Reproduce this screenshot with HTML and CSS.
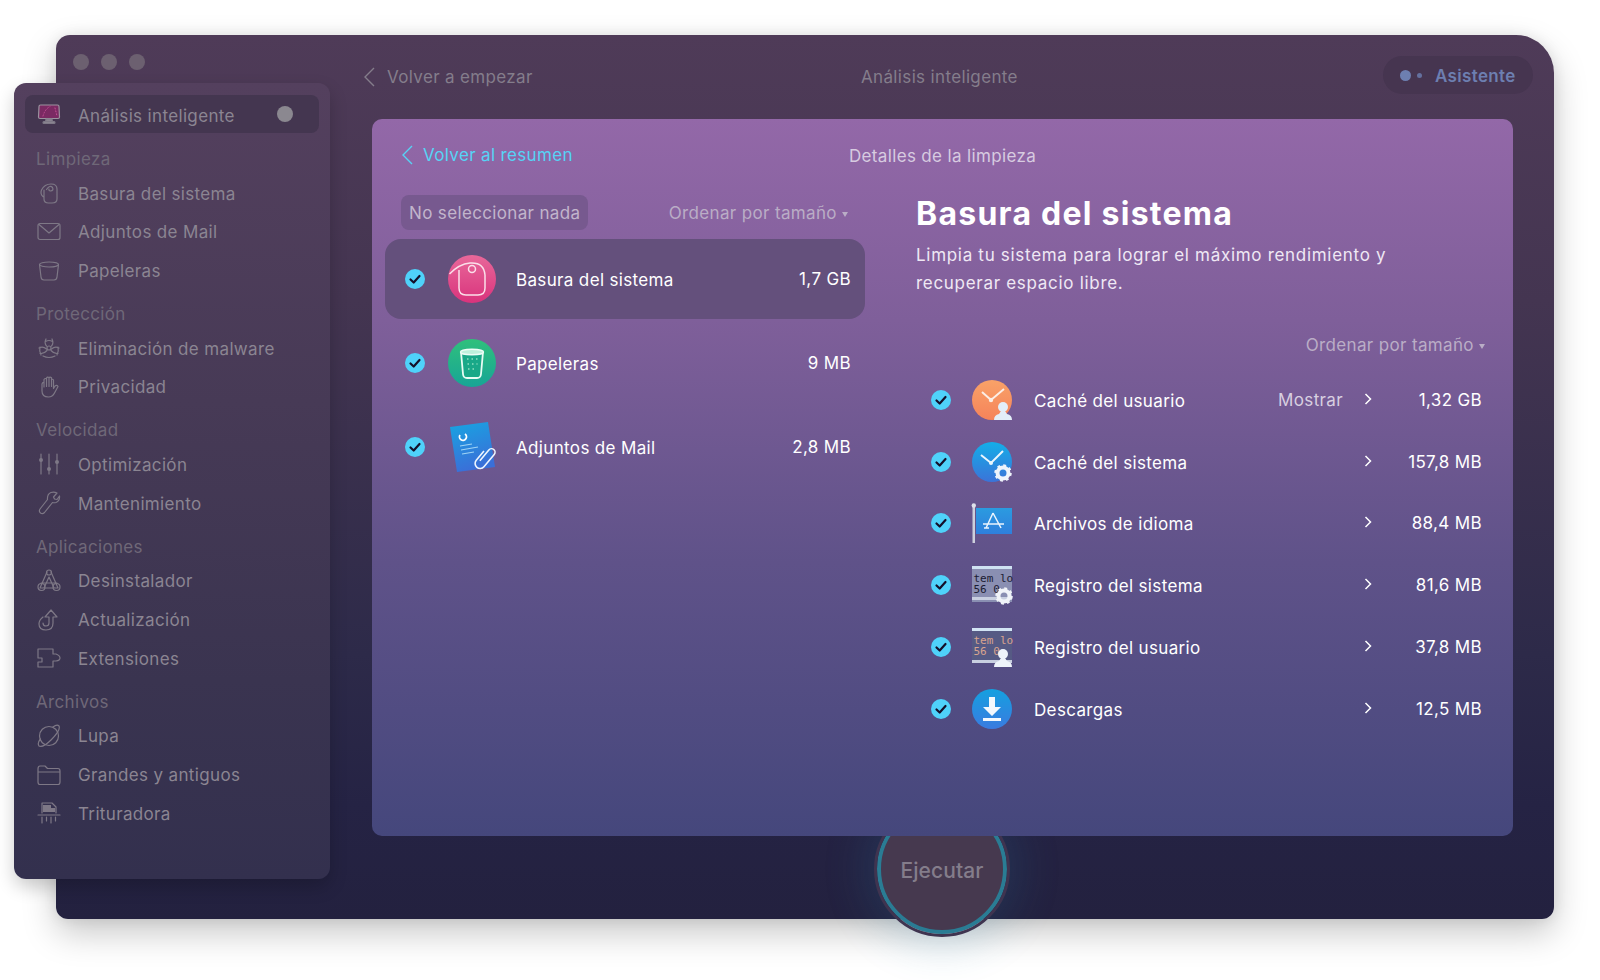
FILE: index.html
```html
<!DOCTYPE html>
<html lang="es">
<head>
<meta charset="utf-8">
<title>Análisis inteligente</title>
<link rel="stylesheet" href="styles.css">
</head>
<body>
<div class="window">
  <aside class="sidebar">
    <div class="side-active">
      <svg class="side-icon" viewBox="0 0 24 24"><path d="M2 4.500 Q2 3 3.500 3 H20.500 Q22 3 22 4.500 L22.500 15 Q22.500 16.500 21 16.500 H3 Q1.500 16.500 1.500 15 Z" fill="#7b2a63" stroke="#9b929f" stroke-width="1.2"/><path d="M6 14 Q8 7 13 4.500 M18 6 L20 14" stroke="#c64f96" stroke-width="1" stroke-dasharray="1 2" fill="none"/><path d="M9 17 H15 L15.500 19.500 H8.500 Z" fill="#8a8490"/><rect x="6" y="19.500" width="12" height="2" rx="1" fill="#8a8490"/></svg>
      <span class="side-active-label">Análisis inteligente</span>
      <span class="side-dot"></span>
    </div>

    <div class="side-head">Limpieza</div>
    <div class="side-item">
      <svg class="side-icon" viewBox="0 0 24 24"><path d="M7 9 V18 Q7 22 11.500 22 H15 Q20 22 20 18 V8 Q20 3 14 3 Q7.500 3 4.500 9 Q3 13 6 15.500" /><path d="M9.500 8.500 Q13 3.500 15.500 6.500 Q17 9.500 13.500 10 Q11.500 9.800 12 8"/></svg>
      <span>Basura del sistema</span>
    </div>
    <div class="side-item">
      <svg class="side-icon" viewBox="0 0 24 24"><rect x="1" y="3.500" width="22" height="16" rx="2"/><path d="M2 4.500 L12 13 L22 4.500"/></svg>
      <span>Adjuntos de Mail</span>
    </div>
    <div class="side-item">
      <svg class="side-icon" viewBox="0 0 24 24"><ellipse cx="12" cy="5.500" rx="9.500" ry="2.500"/><path d="M2.500 5.500 L4 18 Q4.300 21 7 21 H17 Q19.700 21 20 18 L21.500 5.500"/></svg>
      <span>Papeleras</span>
    </div>

    <div class="side-head">Protección</div>
    <div class="side-item">
      <svg class="side-icon" viewBox="0 0 24 24"><circle cx="12" cy="12" r="2"/><path d="M9 3 Q7 7 9.500 10 M15 3 Q17 7 14.500 10 M8.500 5.500 Q12 3.500 15.500 5.500 M2 12 Q6 10 9.500 13 M22 12 Q18 10 14.500 13 M3 17.500 Q7 18 10 14.500 M21 17.500 Q17 18 14 14.500 M6 20 Q12 23 18 20 M3 11 Q2 15 4 19 M21 11 Q22 15 20 19"/></svg>
      <span>Eliminación de malware</span>
    </div>
    <div class="side-item">
      <svg class="side-icon" viewBox="0 0 24 24"><path d="M5 9 V16 Q5 22 11.500 22 Q15.500 22 17.500 18 L21 11.500 Q20 9.500 18 11 L16.500 13.500 V5 Q15.500 3.500 14.500 5 V2.800 Q13 1.500 12 2.800 V2.500 Q10.500 1.500 9.500 3 V4 Q8 2.800 7 4.500 V8 Q6 6.800 5 9 Z M7 5 V12 M9.500 3 V11.500 M12 2.800 V11.500 M14.500 5 V11.500"/></svg>
      <span>Privacidad</span>
    </div>

    <div class="side-head">Velocidad</div>
    <div class="side-item">
      <svg class="side-icon" viewBox="0 0 24 24"><path d="M4 1 V21 M12 1 V21 M20 1 V21"/><circle class="fill" cx="4" cy="7" r="2"/><circle class="fill" cx="12" cy="16" r="2"/><circle class="fill" cx="20" cy="9" r="2"/></svg>
      <span>Optimización</span>
    </div>
    <div class="side-item">
      <svg class="side-icon" viewBox="0 0 24 24"><path d="M20 2 L16.500 6 L17.500 8 L20 8.500 L22.500 5 Q23 10 19 11.500 Q17 12 15.500 11.500 L7.500 21.500 Q5.500 23.500 3.500 22 Q1.500 20.500 3 18 L10.500 8.500 Q10 3 14 1.500 Q17 .5 20 2 Z"/></svg>
      <span>Mantenimiento</span>
    </div>

    <div class="side-head">Aplicaciones</div>
    <div class="side-item">
      <svg class="side-icon" viewBox="0 0 24 24"><path d="M10 3 L3 19 M14 3 L21 19 M4 14 H20 M3 19 H21 M7 19 L12 8 L17 19"/><circle cx="12" cy="3.500" r="2.500"/><circle cx="4.500" cy="18" r="3.500"/><circle cx="19.500" cy="18" r="3.500"/></svg>
      <span>Desinstalador</span>
    </div>
    <div class="side-item">
      <svg class="side-icon" viewBox="0 0 24 24"><path d="M6 9 Q2 12 2 16 Q2 22 9 22 Q16 22 16 15 V9 H20 L14 2 L8 9 H12 V15 Q12 18 9 18 Q6 18 6 15"/></svg>
      <span>Actualización</span>
    </div>
    <div class="side-item">
      <svg class="side-icon" viewBox="0 0 24 24"><path d="M1 3 H16 V8 H19 Q23 9.500 23 12 Q23 14.500 19 15 H16 V21 H1 V16 H5 V12 H1 V8 Z"/></svg>
      <span>Extensiones</span>
    </div>

    <div class="side-head">Archivos</div>
    <div class="side-item">
      <svg class="side-icon" viewBox="0 0 24 24"><circle cx="12" cy="12" r="9.500"/><path d="M2 22 Q6 24 14 16 Q24 6 22 2 Q20 0 16 3 M2 22 Q0 19 3.500 15"/></svg>
      <span>Lupa</span>
    </div>
    <div class="side-item">
      <svg class="side-icon" viewBox="0 0 24 24"><path d="M1 6 Q1 3 3 3 H8 L10.500 5.500 H21 Q23 5.500 23 8 V19 Q23 21.500 21 21.500 H3 Q1 21.500 1 19 Z M1 9 H23"/></svg>
      <span>Grandes y antiguos</span>
    </div>
    <div class="side-item">
      <svg class="side-icon" viewBox="0 0 24 24"><path d="M5 12 V2 H15 L19 6 V12 M1 14 H23 M5 16 V22 M9.500 16 V20 M14 16 V22 M18.500 16 V20"/><path class="fill" d="M6 4 H14 V7 H18 V11 H6 Z"/></svg>
      <span>Trituradora</span>
    </div>
  </aside>

  <header class="titlebar">
    <div class="lights"><i></i><i></i><i></i></div>
    <div class="back-start">
      <svg class="chev-left" viewBox="0 0 14 22"><path d="M12 2 L3 11 L12 20"/></svg>
      <span>Volver a empezar</span>
    </div>
    <div class="title-center">Análisis inteligente</div>
    <div class="assistant"><i class="a-big"></i><i class="a-small"></i><b>Asistente</b></div>
  </header>

  <main class="panel">
    <div class="panel-head">
      <div class="back-link">
        <svg class="chev-left" viewBox="0 0 14 22"><path d="M12 2 L3 11 L12 20"/></svg>
        <span>Volver al resumen</span>
      </div>
      <div class="panel-title">Detalles de la limpieza</div>
    </div>

    <div class="panel-body">
      <section class="left-col">
        <div class="toolbar">
          <div class="pill-btn">No seleccionar nada</div>
          <div class="sort">Ordenar por tamaño <i class="caret"></i></div>
        </div>

        <div class="cat-row selected">
          <span class="check"><svg viewBox="0 0 20 20"><path d="M5.500 10.500 L8.700 13.500 L14.500 7"/></svg></span>
          <svg class="cat-icon" viewBox="0 0 48 48"><defs><linearGradient id="gp" x1="0" y1="0" x2="0" y2="1"><stop offset="0" stop-color="#e8689a"/><stop offset="1" stop-color="#d9337c"/></linearGradient></defs><circle cx="24" cy="24" r="24" fill="url(#gp)"/><path d="M1.500 19 Q11 9 22 8 Q36 7 37 20 V33 Q37 40 30 40 H18 Q11 40 11 33 V15" fill="none" stroke="#fbdfe9" stroke-width="1.500"/><circle cx="24" cy="14" r="3.500" fill="none" stroke="#fbdfe9" stroke-width="1.500"/></svg>
          <span class="cat-name">Basura del sistema</span>
          <span class="cat-size">1,7 GB</span>
        </div>

        <div class="cat-row">
          <span class="check"><svg viewBox="0 0 20 20"><path d="M5.500 10.500 L8.700 13.500 L14.500 7"/></svg></span>
          <svg class="cat-icon" viewBox="0 0 48 48"><defs><linearGradient id="gg" x1="0" y1="0" x2="0" y2="1"><stop offset="0" stop-color="#2fc07c"/><stop offset="1" stop-color="#17a596"/></linearGradient></defs><circle cx="24" cy="24" r="24" fill="url(#gg)"/><path d="M13 13 L15 35 Q15.300 39 19 39 H29 Q32.700 39 33 35 L35 13" fill="#19a888" stroke="#e8fbf3" stroke-width="1.800"/><ellipse cx="24" cy="13" rx="11.500" ry="2.800" fill="#bff1dc" stroke="#eefcf6" stroke-width="1.400"/><path d="M19 20 H30 M19.500 25 H29.500 M20 30 H29" stroke="#8fe0bf" stroke-width="1.600" stroke-dasharray="1.500 3"/></svg>
          <span class="cat-name">Papeleras</span>
          <span class="cat-size">9 MB</span>
        </div>

        <div class="cat-row">
          <span class="check"><svg viewBox="0 0 20 20"><path d="M5.500 10.500 L8.700 13.500 L14.500 7"/></svg></span>
          <svg class="cat-icon" viewBox="0 0 48 48"><defs><linearGradient id="gb" x1="0" y1="0" x2=".3" y2="1"><stop offset="0" stop-color="#17a5e2"/><stop offset="1" stop-color="#3a6fd8"/></linearGradient></defs><path d="M2 4 L40 -1 L47 44 L9 49 Z" fill="url(#gb)"/><path d="M12 12 A3.500 3.500 0 1 0 17 11" fill="none" stroke="#fff" stroke-width="1.800"/><path d="M12 23 L24 21 M13 27 L30 24 M14 31 L26 29" stroke="#9fd4f5" stroke-width="1.200"/><g transform="rotate(40 38 35)"><path d="M35 41 V27 a3.500 3.500 0 0 1 7 0 V43 a5 5 0 0 1 -10 0 V31" fill="none" stroke="#eef6ff" stroke-width="1.600"/></g></svg>
          <span class="cat-name">Adjuntos de Mail</span>
          <span class="cat-size">2,8 MB</span>
        </div>
      </section>

      <section class="right-col">
        <h1 class="detail-title">Basura del sistema</h1>
        <p class="detail-desc">Limpia tu sistema para lograr el máximo rendimiento y recuperar espacio libre.</p>
        <div class="sort sort-right">Ordenar por tamaño <i class="caret"></i></div>

        <div class="file-list">
          <div class="file-row">
            <span class="check"><svg viewBox="0 0 20 20"><path d="M5.500 10.500 L8.700 13.500 L14.500 7"/></svg></span>
            <svg class="file-icon" viewBox="0 0 40 40"><defs><linearGradient id="go" x1="0" y1="0" x2="0" y2="1"><stop offset="0" stop-color="#f9a268"/><stop offset="1" stop-color="#f5835a"/></linearGradient></defs><circle cx="20" cy="20" r="20" fill="url(#go)"/><path d="M10 12 L19 20 L32 9" fill="none" stroke="#fbeee6" stroke-width="2"/><circle cx="19" cy="20" r="2.200" fill="#fbeee6"/><circle cx="31" cy="27" r="5" fill="#e3eef8"/><path d="M22 40 Q22 35 27 34 L29 31 H33 L35 34 Q40 35 40 40 Z" fill="#e3eef8"/></svg>
            <span class="file-name">Caché del usuario</span>
            <span class="show">Mostrar</span>
            <svg class="chev-right" viewBox="0 0 10 14"><path d="M2.500 2 L7.500 7 L2.500 12"/></svg>
            <span class="file-size">1,32 GB</span>
          </div>

          <div class="file-row">
            <span class="check"><svg viewBox="0 0 20 20"><path d="M5.500 10.500 L8.700 13.500 L14.500 7"/></svg></span>
            <svg class="file-icon" viewBox="0 0 40 40"><defs><linearGradient id="gc" x1="0" y1="0" x2="0" y2="1"><stop offset="0" stop-color="#14aee8"/><stop offset="1" stop-color="#3b73d8"/></linearGradient></defs><circle cx="20" cy="20" r="20" fill="url(#gc)"/><path d="M9 13 L19 21 L31 9" fill="none" stroke="#eaf6fd" stroke-width="2"/><circle cx="19" cy="21" r="2" fill="#eaf6fd"/><circle cx="31" cy="31" r="5.500" fill="none" stroke="#eef4fb" stroke-width="4"/><circle cx="31" cy="31" r="7.500" fill="none" stroke="#eef4fb" stroke-width="2.500" stroke-dasharray="2.800 3.090"/></svg>
            <span class="file-name">Caché del sistema</span>
            <span class="show"></span>
            <svg class="chev-right" viewBox="0 0 10 14"><path d="M2.500 2 L7.500 7 L2.500 12"/></svg>
            <span class="file-size">157,8 MB</span>
          </div>

          <div class="file-row">
            <span class="check"><svg viewBox="0 0 20 20"><path d="M5.500 10.500 L8.700 13.500 L14.500 7"/></svg></span>
            <svg class="file-icon" viewBox="0 0 40 40"><defs><linearGradient id="gf" x1="0" y1="0" x2="0" y2="1"><stop offset="0" stop-color="#2b9be0"/><stop offset="1" stop-color="#2f7fdc"/></linearGradient></defs><rect x="0.500" y="2" width="2.500" height="38" fill="#cdd0dc"/><circle cx="1.800" cy="2.500" r="2.200" fill="#dfe1ea"/><path d="M4 5 H40 V31 H4 Z" fill="url(#gf)"/><path d="M21 10 L14 25 M21 10 L29 25 M11 21 H32 M12 25 L17 25" fill="none" stroke="#eaf4fd" stroke-width="1.500"/></svg>
            <span class="file-name">Archivos de idioma</span>
            <span class="show"></span>
            <svg class="chev-right" viewBox="0 0 10 14"><path d="M2.500 2 L7.500 7 L2.500 12"/></svg>
            <span class="file-size">88,4 MB</span>
          </div>

          <div class="file-row">
            <span class="check"><svg viewBox="0 0 20 20"><path d="M5.500 10.500 L8.700 13.500 L14.500 7"/></svg></span>
            <svg class="file-icon" viewBox="0 0 40 40"><rect x="0" y="1" width="40" height="36" fill="#8a8fb2"/><rect x="0" y="1" width="40" height="3" fill="#cfe2f2"/><rect x="0" y="32" width="40" height="3" fill="#c8cfe0"/><text class="log-text dark" x="1.500" y="17">tem lo</text><text class="log-text dark" x="1.500" y="28">56 0</text><circle cx="32" cy="31" r="5.500" fill="none" stroke="#f0f3f8" stroke-width="4"/><circle cx="32" cy="31" r="7.500" fill="none" stroke="#f0f3f8" stroke-width="2.500" stroke-dasharray="2.800 3.090"/></svg>
            <span class="file-name">Registro del sistema</span>
            <span class="show"></span>
            <svg class="chev-right" viewBox="0 0 10 14"><path d="M2.500 2 L7.500 7 L2.500 12"/></svg>
            <span class="file-size">81,6 MB</span>
          </div>

          <div class="file-row">
            <span class="check"><svg viewBox="0 0 20 20"><path d="M5.500 10.500 L8.700 13.500 L14.500 7"/></svg></span>
            <svg class="file-icon" viewBox="0 0 40 40"><rect x="0" y="1" width="40" height="35" fill="#565a84"/><rect x="0" y="1" width="40" height="3" fill="#d2e4f4"/><rect x="0" y="33" width="40" height="3" fill="#c8cfe0"/><text class="log-text warm" x="1.500" y="17">tem lo</text><text class="log-text warm" x="1.500" y="28">56 0</text><circle cx="31" cy="27" r="5" fill="#eef4fa"/><path d="M22 40 Q22 35 27 34 L29 31 H33 L35 34 Q40 35 40 40 Z" fill="#eef4fa"/></svg>
            <span class="file-name">Registro del usuario</span>
            <span class="show"></span>
            <svg class="chev-right" viewBox="0 0 10 14"><path d="M2.500 2 L7.500 7 L2.500 12"/></svg>
            <span class="file-size">37,8 MB</span>
          </div>

          <div class="file-row">
            <span class="check"><svg viewBox="0 0 20 20"><path d="M5.500 10.500 L8.700 13.500 L14.500 7"/></svg></span>
            <svg class="file-icon" viewBox="0 0 40 40"><defs><linearGradient id="gd" x1="0" y1="0" x2="0" y2="1"><stop offset="0" stop-color="#14a0e0"/><stop offset="1" stop-color="#3a7be0"/></linearGradient></defs><circle cx="20" cy="20" r="20" fill="url(#gd)"/><path d="M17 8 H23 V18 H29 L20 27 L11 18 H17 Z" fill="#f2f8fd"/><rect x="11" y="29" width="18" height="3" fill="#f2f8fd"/></svg>
            <span class="file-name">Descargas</span>
            <span class="show"></span>
            <svg class="chev-right" viewBox="0 0 10 14"><path d="M2.500 2 L7.500 7 L2.500 12"/></svg>
            <span class="file-size">12,5 MB</span>
          </div>
        </div>
      </section>
    </div>
  </main>

  <div class="run-btn">Ejecutar</div>
</div>
</body>
</html>
```

FILE: styles.css
```css
* { box-sizing: border-box; }

html, body { margin: 0; height: 980px; background: #fff; overflow: hidden; }

body {
  padding: 35px 46px 61px 56px;
  font-family: Inter, "Liberation Sans", sans-serif;
  font-size: 17px;
  letter-spacing: .35px;
  -webkit-font-smoothing: antialiased;
}

.window {
  position: relative;
  height: 884px;
  padding: 0 41px 0 316px;
  border-radius: 14px 38px 12px 12px;
  background: linear-gradient(180deg, #4f3b58 0%, #443551 30%, #2d2a49 70%, #252344 87%, #23213f 100%);
  box-shadow: 0 14px 34px rgba(0, 0, 0, .22), 0 0 14px rgba(0, 0, 0, .08);
}

/* Sidebar floats over the window's left edge */
.sidebar {
  position: absolute;
  left: -42px;
  top: 48px;
  width: 316px;
  height: 796px;
  padding: 12px 11px 0;
  border-radius: 12px;
  background: linear-gradient(180deg, #54405e 0%, #473a56 40%, #3a3450 75%, #33304e 100%);
  box-shadow: 0 8px 18px rgba(0, 0, 0, .2);
  color: #8b8592;
}

.side-active {
  display: flex;
  align-items: center;
  height: 38px;
  margin-bottom: 2px;
  padding: 0 26px 0 12px;
  border-radius: 8px;
  background: #443650;
}

.side-active-label { flex: 1; padding-top: 3px; }

.side-dot {
  width: 16px;
  height: 16px;
  border-radius: 50%;
  background: #8b8890;
}

.side-head {
  height: 39px;
  padding: 14px 0 0 11px;
  line-height: 20px;
  color: #6f6878;
}

.side-item {
  display: flex;
  align-items: center;
  height: 38.67px;
  padding-left: 12px;
}

.side-item span { padding-top: 1px; }

.side-icon {
  flex: none;
  width: 24px;
  height: 24px;
  margin-right: 17px;
  fill: none;
  stroke: #7e7886;
  stroke-width: 1.2;
  stroke-linejoin: round;
  stroke-linecap: round;
}

.side-icon .fill { fill: #7e7886; stroke: none; }

/* Title bar */
.titlebar {
  position: relative;
  display: flex;
  align-items: center;
  height: 84px;
  color: #847d8b;
}

.lights {
  position: absolute;
  left: -299px;
  top: 19px;
  display: flex;
  gap: 12px;
}

.lights i {
  width: 16px;
  height: 16px;
  border-radius: 50%;
  background: #6c6070;
}

.back-start { display: flex; align-items: center; gap: 11px; width: 300px; margin-left: -10px; }

.title-center { flex: 1; margin-left: 199px; }

.assistant {
  display: flex;
  align-items: center;
  flex: none;
  width: 150px;
  height: 38px;
  margin: -4px -20px 0 0;
  padding-left: 17px;
  border-radius: 19px;
  background: #463550;
  color: #6d7fb0;
}

.assistant b { margin-left: 13px; padding-top: 1px; font-weight: 600; }
.a-big { width: 11px; height: 11px; border-radius: 50%; background: #6d7fb0; }
.a-small { width: 5px; height: 5px; margin-left: 6px; border-radius: 50%; background: #64709e; }

.chev-left {
  flex: none;
  width: 14px;
  height: 22px;
  fill: none;
  stroke: currentColor;
  stroke-width: 1.4;
}

/* Main panel */
.panel {
  position: relative;
  z-index: 1;
  height: 717px;
  border-radius: 10px;
  background: linear-gradient(180deg, #9368a8 0%, #7f5f9a 28%, #5f5289 62%, #45477c 100%);
  color: #fff;
}

.panel-head {
  position: relative;
  height: 76px;
  padding: 25px 0 0 28px;
}

.back-link {
  display: flex;
  align-items: center;
  gap: 9px;
  color: #56d3f5;
}

.panel-title {
  position: absolute;
  left: 0;
  right: 0;
  top: 27px;
  text-align: center;
  color: #d7cbe0;
}

.panel-body { display: flex; }

.left-col { flex: none; width: 480px; margin-left: 13px; }

.toolbar {
  display: flex;
  justify-content: space-between;
  align-items: center;
  height: 35px;
  margin-bottom: 9px;
  padding: 0 17px 0 16px;
}

.pill-btn {
  display: flex;
  align-items: center;
  height: 35px;
  padding: 0 8px;
  border-radius: 8px;
  background: #77598f;
  color: #c2b5cc;
}

.sort { color: #baadc6; }

.caret {
  display: inline-block;
  width: 0;
  height: 0;
  margin: 0 0 2px 0;
  border: 3px solid transparent;
  border-top: 5px solid #baadc6;
  border-bottom: 0;
}

.cat-row {
  display: flex;
  align-items: center;
  height: 80px;
  margin-bottom: 4px;
  padding: 0 14px 0 20px;
  border-radius: 16px;
}

.cat-row.selected { background: #64507c; }

.check {
  flex: none;
  width: 20px;
  height: 20px;
  border-radius: 50%;
  background: #4fd2fa;
}

.check svg {
  display: block;
  width: 20px;
  height: 20px;
  fill: none;
  stroke: #14102a;
  stroke-width: 2.200;
  stroke-linecap: round;
  stroke-linejoin: round;
}

.cat-icon { flex: none; width: 48px; height: 48px; margin-left: 23px; overflow: visible; }
.cat-name { flex: 1; margin-left: 20px; padding-top: 2px; }
.cat-size { padding-top: 0; }
.file-icon { flex: none; width: 40px; height: 40px; margin-left: 21px; overflow: visible; }

.right-col { flex: none; width: 566px; margin-left: 51px; }

.detail-title {
  margin: -1px 0 0;
  height: 40px;
  line-height: 40px;
  font-size: 32px;
  font-weight: 700;
  letter-spacing: 1.25px;
}

.detail-desc {
  margin: 8px 0 0;
  width: 490px;
  line-height: 27.5px;
  letter-spacing: .7px;
  color: #efe8f4;
}

.sort-right { margin: 38px -3px 0 0; line-height: 20px; text-align: right; }

.file-list { margin-top: 14px; }

.file-row {
  display: flex;
  align-items: center;
  height: 61.8px;
  padding-left: 15px;
}

.file-name { flex: 1; margin-left: 22px; padding-top: 2px; }
.show { color: #d8cfe0; }

.chev-right {
  flex: none;
  width: 10px;
  height: 14px;
  margin: 0 0 2px 20px;
  fill: none;
  stroke: #fff;
  stroke-width: 1.500;
}

.file-size { width: 109px; text-align: right; }

.log-text { font-family: "DejaVu Sans Mono", "Liberation Mono", monospace; font-size: 11px; letter-spacing: 0; }
.log-text.dark { fill: #1c1c33; }
.log-text.warm { fill: #d9a48f; }

/* Run button sits behind the panel's bottom edge */
.run-btn {
  position: absolute;
  left: 821px;
  top: 769px;
  display: flex;
  align-items: center;
  justify-content: center;
  width: 130px;
  height: 130px;
  padding-top: 3px;
  border: 4px solid #2a7c94;
  border-radius: 50%;
  background: #46394f;
  outline: 3px solid #3f3450;
  font-size: 21px;
  font-weight: 500;
  letter-spacing: .1px;
  color: #847d8b;
  box-shadow: 0 0 44px 12px rgba(40, 120, 160, .2);
}
```
